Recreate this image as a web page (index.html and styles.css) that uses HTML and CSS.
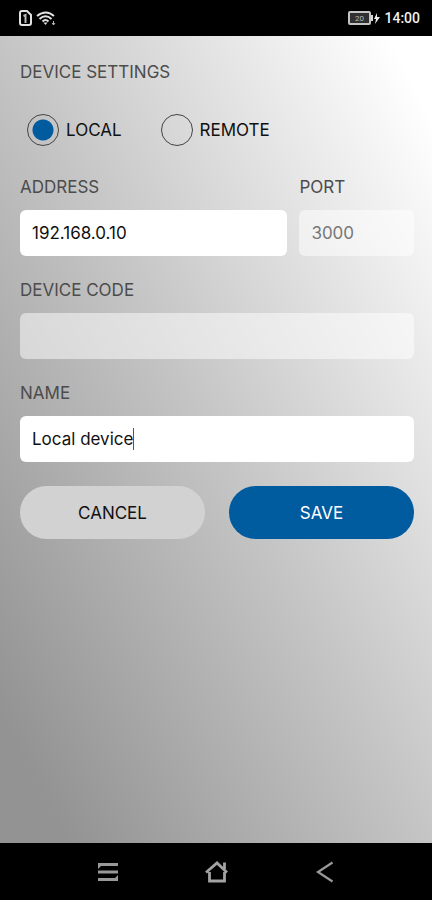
FILE: index.html
```html
<!DOCTYPE html>
<html lang="en">
<head>
<meta charset="utf-8">
<meta name="viewport" content="width=device-width, initial-scale=1">
<title>Device settings</title>
<link rel="stylesheet" href="styles.css">
</head>
<body>
<header class="status-bar">
  <div class="status-group">
    <svg class="sim-icon" width="13" height="16" viewBox="0 0 13 16" aria-hidden="true"><path d="M3 1h5l4 4v8q0 2-2 2H3q-2 0-2-2V3q0-2 2-2z" fill="none" stroke="#e2e2e2" stroke-width="2"/><path d="M4.500 6l2-1v8" fill="none" stroke="#b8b8b8" stroke-width="2"/></svg>
    <svg width="20" height="16" viewBox="0 0 20 16" aria-hidden="true"><g fill="none" stroke="#e2e2e2" stroke-width="2"><path d="M1 6q9-7 17 0"/><path d="M3.500 9q6-5.500 12 0"/><path d="M6.500 11.500q3-3 6 0"/></g><path d="M7.500 12.500h4l-2 2.500z" fill="#e2e2e2"/><path d="M17.500 11v4M16 13l1.500 2 1.500-2" fill="none" stroke="#b5b5b5"/></svg>
  </div>
  <div class="status-group">
    <svg width="32" height="16" viewBox="0 0 32 16" aria-hidden="true"><rect x="1" y="2" width="21" height="12" rx="1" fill="#303030" stroke="#c4c4c4" stroke-width="2"/><path d="M23 5h2v6h-2z" fill="#d8d8d8"/><text class="battery-level" x="11.500" y="11" text-anchor="middle">20</text><path d="M29 3l-3 6h2l-1 5 5-7h-3z" fill="#eee"/></svg>
    <time class="clock">14:00</time>
  </div>
</header>
<main class="screen">
  <form class="settings">
    <h1 class="title">DEVICE SETTINGS</h1>
    <div class="modes">
      <label class="mode"><input class="radio" type="radio" name="mode" checked>LOCAL</label>
      <label class="mode"><input class="radio" type="radio" name="mode">REMOTE</label>
    </div>
    <div class="fields">
      <div class="field-row">
        <div class="field"><label for="address">ADDRESS</label><input class="box" id="address" type="text" value="192.168.0.10"></div>
        <div class="field"><label for="port">PORT</label><input class="box" id="port" type="text" value="3000" disabled></div>
      </div>
      <div class="field"><label for="code">DEVICE CODE</label><input class="box" id="code" type="text" disabled></div>
      <div class="field"><label for="name">NAME</label><div class="box active"><input class="growing" id="name" type="text" value="Local device"><span class="caret"></span></div></div>
    </div>
    <div class="actions">
      <button class="button" type="button">CANCEL</button>
      <button class="button primary" type="submit">SAVE</button>
    </div>
  </form>
</main>
<nav class="nav-bar">
  <button class="nav-button" type="button" aria-label="Recent apps"><svg width="24" height="24" viewBox="0 0 24 24"><path d="M2 3h20v3H5l-3 3zM2 10.500h20v3H2zM22 15v6H2v-3h17z" fill="#999"/></svg></button>
  <button class="nav-button" type="button" aria-label="Home"><svg width="24" height="24" viewBox="0 0 24 24"><path d="M2 12.500L13 3l10 9.500M5.500 12v9h15v-9M20.500 2.500V9" fill="none" stroke="#a2a2a2" stroke-width="2.800"/></svg></button>
  <button class="nav-button" type="button" aria-label="Back"><svg width="24" height="24" viewBox="0 0 24 24"><path d="M20.500 2.500L6 12l14.500 9.500" fill="none" stroke="#999" stroke-width="2.200"/></svg></button>
</nav>
</body>
</html>
```
FILE: styles.css
```css
* { box-sizing: border-box; }

body {
  margin: 0;
  min-height: 100vh;
  display: flex;
  flex-direction: column;
  background: #000;
  font-family: Inter, "Open Sans", sans-serif;
  font-size: 17px;
  line-height: 26px;
  color: #111;
}

input, button { font: inherit; color: inherit; margin: 0; }
button { border: 0; padding: 0; cursor: pointer; }
svg { display: block; }

.status-bar {
  display: flex;
  justify-content: space-between;
  align-items: center;
  height: 36px;
  padding: 0 12px 0 19px;
}
.status-group { display: flex; align-items: center; gap: 4px; }
.clock { font-family: Roboto, sans-serif; font-size: 14px; font-weight: 500; line-height: 20px; color: #f0f0f0; }
.battery-level { font: 8px Roboto, sans-serif; fill: #bbb; }

.screen {
  flex: 1;
  padding: 23px 18px 24px 20px;
  background: linear-gradient(to top right, #939393 8%, #c5c5c5 50%, #fff 95%);
}
.title { margin: 0; font-size: 17px; font-weight: 400; color: #4c4c4c; }

.modes { display: flex; gap: 39px; margin: 29px 7px 28px; }
.mode { display: flex; align-items: center; gap: 7px; }
.radio {
  appearance: none;
  width: 32px;
  height: 32px;
  border: 1px solid #444;
  border-radius: 50%;
}
.radio:checked { background: radial-gradient(circle, #005b9f 10px, transparent 11px); }

.fields { display: grid; gap: 21px; }
.field-row { display: grid; grid-template-columns: 7fr 3fr; gap: 12px; }
.field { display: grid; gap: 10px; min-width: 0; color: #4c4c4c; }
.box {
  width: 100%;
  min-width: 0;
  height: 46px;
  padding: 0 12px;
  border: 0;
  border-radius: 6px;
  background: #fff;
  color: #111;
}
.box:disabled { background: rgba(255, 255, 255, 0.5); color: #777; }
.active { display: flex; align-items: center; }
.growing {
  field-sizing: content;
  max-width: 100%;
  padding: 0;
  border: 0;
  outline: 0;
  background: none;
  caret-color: transparent;
}
.caret { flex: none; width: 1px; height: 22px; background: #555; }

.actions { display: grid; grid-template-columns: 1fr 1fr; gap: 24px; margin-top: 24px; }
.button { height: 53px; border-radius: 27px; background: #d2d2d2; }
.primary { background: #005b9f; color: #fff; }

.nav-bar {
  display: flex;
  justify-content: center;
  gap: 84px;
  height: 57px;
}
.nav-button { display: grid; place-items: center; width: 24px; background: none; }
```
